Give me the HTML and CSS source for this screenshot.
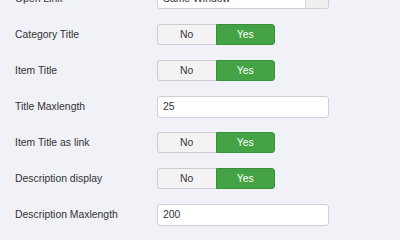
FILE: index.html
```html
<!DOCTYPE html>
<html>
<head>
<meta charset="utf-8">
<link rel="stylesheet" href="styles.css">
</head>
<body>
<div class="form">
  <div class="row">
    <div class="label">Open Link</div>
    <div class="select"><span class="select-text">Same Window</span><span class="select-btn"></span></div>
  </div>
  <div class="row">
    <div class="label">Category Title</div>
    <div class="toggle"><span class="opt no">No</span><span class="opt yes">Yes</span></div>
  </div>
  <div class="row">
    <div class="label">Item Title</div>
    <div class="toggle"><span class="opt no">No</span><span class="opt yes">Yes</span></div>
  </div>
  <div class="row">
    <div class="label">Title Maxlength</div>
    <div class="input">25</div>
  </div>
  <div class="row">
    <div class="label">Item Title as link</div>
    <div class="toggle"><span class="opt no">No</span><span class="opt yes">Yes</span></div>
  </div>
  <div class="row">
    <div class="label">Description display</div>
    <div class="toggle"><span class="opt no">No</span><span class="opt yes">Yes</span></div>
  </div>
  <div class="row">
    <div class="label">Description Maxlength</div>
    <div class="input">200</div>
  </div>
</div>
</body>
</html>
```

FILE: styles.css
```css
html, body {
  margin: 0;
  padding: 0;
  background: #f1f1f8;
  overflow: hidden;
}
body {
  font-family: "Liberation Sans", Arial, sans-serif;
  font-size: 10.4px;
  color: #333;
  width: 400px;
  height: 240px;
}
.form {
  margin-top: -19.5px;
}
.row {
  display: flex;
  align-items: center;
  height: 36px;
}
.label {
  width: 142px;
  padding-left: 15px;
  flex: none;
}
.select {
  display: flex;
  width: 172px;
  height: 21px;
  box-sizing: border-box;
  border: 1px solid #cfcfd4;
  border-radius: 3px;
  background: #fff;
  overflow: hidden;
}
.select-text {
  flex: 1;
  padding-left: 5px;
  line-height: 19px;
}
.select-btn {
  width: 22px;
  background: #efeff0;
  border-left: 1px solid #d6d6d6;
}
.toggle {
  display: flex;
  width: 118px;
  height: 21px;
  box-sizing: border-box;
  border-radius: 3px;
  overflow: hidden;
}
.opt {
  flex: 1;
  display: flex;
  align-items: center;
  justify-content: center;
  box-sizing: border-box;
}
.no {
  background: #f3f3f3;
  border: 1px solid #cdcdd0;
  border-right: none;
  border-radius: 3px 0 0 3px;
  color: #333;
}
.yes {
  background: #44a344;
  border: 1px solid #3a8f3a;
  border-radius: 0 3px 3px 0;
  color: #fff;
}
.input {
  width: 172px;
  height: 22px;
  box-sizing: border-box;
  border: 1px solid #cfcfd4;
  border-radius: 3px;
  background: #fff;
  padding-left: 5px;
  display: flex;
  align-items: center;
}
```
